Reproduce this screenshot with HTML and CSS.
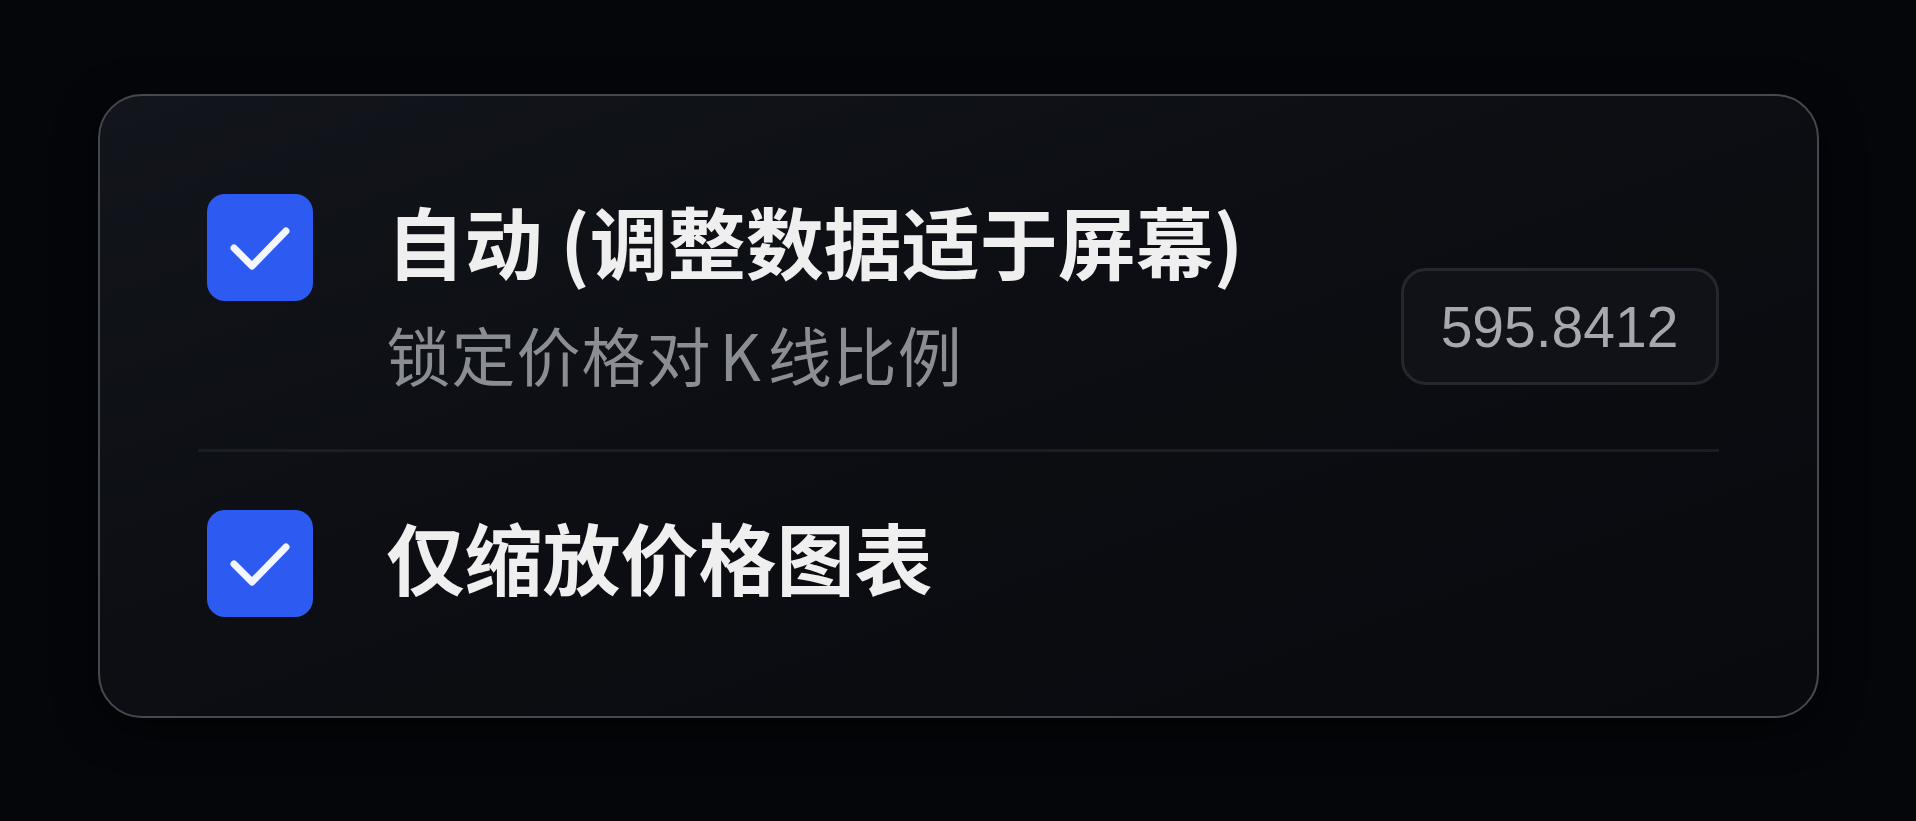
FILE: index.html
```html
<!DOCTYPE html>
<html lang="zh-CN">

<head>
    <meta charset="UTF-8">
    <title>价格坐标设置</title>
    <link rel="stylesheet" href="styles.css">
</head>

<body>
    <div class="panel">
        <div class="option option-top">
            <span class="check">
                <svg viewBox="0 0 106 107" width="106" height="107">
                    <polyline points="27,54 45,72 79,37" />
                </svg>
            </span>
            <div class="option-text">
                <div class="title">自动 (调整数据适于屏幕)</div>
                <div class="subtitle">锁定价格对<span class="latin">K</span>线比例</div>
            </div>
            <div class="value">595.8412</div>
        </div>
        <div class="divider"></div>
        <div class="option">
            <span class="check">
                <svg viewBox="0 0 106 107" width="106" height="107">
                    <polyline points="27,54 45,72 79,37" />
                </svg>
            </span>
            <div class="option-text">
                <div class="title">仅缩放价格图表</div>
            </div>
        </div>
    </div>
</body>

</html>
```

FILE: styles.css
```css
body {
    margin: 0;
    min-height: 100vh;
    background-color: #05060a;
    font-family: "Noto Sans CJK SC", "Noto Sans", sans-serif;
    color: #f2f2f3;
}

.panel {
    box-sizing: border-box;
    width: 1721px;
    margin: 94px auto 0;
    padding: 98px 98px 99px;
    border: 2px solid #45484e;
    border-radius: 44px;
    background: linear-gradient(160deg, #12151b 0%, #0c0e13 45%, #090a0e 100%);
    box-shadow: 0 10px 40px rgba(0, 0, 0, 0.6);
}

.option {
    display: flex;
    align-items: flex-start;
    padding-left: 9px;
}

.option-top {
    padding-bottom: 58px;
}

.check {
    flex: none;
    width: 106px;
    height: 107px;
    border-radius: 18px;
    background-color: #2d5bf1;
}

.check svg {
    display: block;
}

.check polyline {
    fill: none;
    stroke: #f4f6ff;
    stroke-width: 7;
    stroke-linecap: round;
    stroke-linejoin: round;
}

.option-text {
    margin-left: 74px;
}

.title {
    font-size: 78px;
    font-weight: 700;
    line-height: 1.2;
    color: #efeff0;
    white-space: nowrap;
}

.subtitle {
    margin-top: 27px;
    font-size: 64px;
    line-height: 1.2;
    letter-spacing: 1px;
    color: #8a8d93;
    white-space: nowrap;
}

.subtitle .latin {
    margin: 0 6px 0 8px;
}

.value {
    box-sizing: border-box;
    display: flex;
    align-items: center;
    justify-content: center;
    width: 318px;
    height: 117px;
    margin-top: 74px;
    margin-left: auto;
    border: 3px solid #24272d;
    border-radius: 25px;
    background-color: #101217;
    font-family: "Liberation Sans", Arial, sans-serif;
    font-size: 57px;
    color: #a5a8ae;
}

.divider {
    height: 3px;
    margin-bottom: 58px;
    background-color: #1a1d22;
}
```
